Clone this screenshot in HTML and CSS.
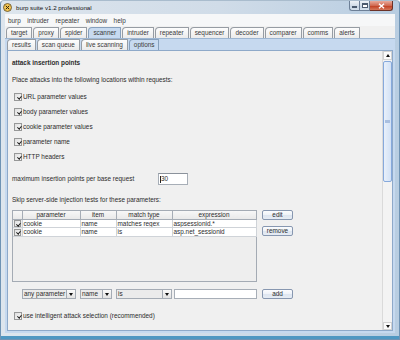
FILE: index.html
```html
<!DOCTYPE html>
<html>
<head>
    <title>burp suite v1.2 professional</title>
    <link rel="stylesheet" href="styles.css">
</head>
<body>
    <div class="window">
        <div class="titlebar">
            <svg class="app-icon" width="9" height="9" viewBox="0 0 9 9">
                <circle cx="4.5" cy="4.5" r="4" fill="#f2c451" stroke="#5b4a26" stroke-width="0.8"/>
                <path d="M2.8 2.8 L6.2 6.2 M6.2 2.8 L2.8 6.2" stroke="#2e2410" stroke-width="1"/>
            </svg>
            <span class="title">burp suite v1.2 professional</span>
            <div class="caption">
                <span class="cap cap-min"><span class="min-bar"></span></span>
                <span class="cap cap-max"><span class="max-box"></span></span>
                <span class="cap cap-close">
                    <svg width="7" height="6" viewBox="0 0 7 6"><path d="M1 0.8 L6 5.2 M6 0.8 L1 5.2" stroke="#fff" stroke-width="1.4"/></svg>
                </span>
            </div>
        </div>

        <div class="frame-body">
            <div class="client">
                <div class="menubar">
                    <span>burp</span>
                    <span>intruder</span>
                    <span>repeater</span>
                    <span>window</span>
                    <span>help</span>
                </div>

                <div class="tabs main-tabs">
                    <span class="tab">target</span>
                    <span class="tab">proxy</span>
                    <span class="tab">spider</span>
                    <span class="tab active">scanner</span>
                    <span class="tab">intruder</span>
                    <span class="tab">repeater</span>
                    <span class="tab">sequencer</span>
                    <span class="tab">decoder</span>
                    <span class="tab">comparer</span>
                    <span class="tab">comms</span>
                    <span class="tab">alerts</span>
                </div>

                <div class="tab-panel">
                    <div class="tabs sub-tabs">
                        <span class="tab">results</span>
                        <span class="tab">scan queue</span>
                        <span class="tab">live scanning</span>
                        <span class="tab active">options</span>
                    </div>

                    <div class="options-pane">
                        <div class="form">
                            <div class="heading">attack insertion points</div>
                            <div class="intro">Place attacks into the following locations within requests:</div>

                            <div class="checks">
                                <div class="check-row"><span class="cb checked"></span><span>URL parameter values</span></div>
                                <div class="check-row"><span class="cb checked"></span><span>body parameter values</span></div>
                                <div class="check-row"><span class="cb checked"></span><span>cookie parameter values</span></div>
                                <div class="check-row"><span class="cb checked"></span><span>parameter name</span></div>
                                <div class="check-row"><span class="cb checked"></span><span>HTTP headers</span></div>
                            </div>

                            <div class="max-row">
                                <span class="max-label">maximum insertion points per base request</span>
                                <span class="num-field"><span class="caret"></span>30</span>
                            </div>

                            <div class="skip">Skip server-side injection tests for these parameters:</div>

                            <div class="table-row">
                                <div class="table-box">
                                    <table>
                                        <colgroup>
                                            <col class="col-check">
                                            <col class="col-param">
                                            <col class="col-item">
                                            <col class="col-match">
                                            <col class="col-expr">
                                        </colgroup>
                                        <thead>
                                            <tr><th></th><th>parameter</th><th>item</th><th>match type</th><th>expression</th></tr>
                                        </thead>
                                        <tbody>
                                            <tr>
                                                <td class="cell-check"><span class="cb checked small"></span></td>
                                                <td>cookie</td><td>name</td><td>matches regex</td><td>aspsessionid.*</td>
                                            </tr>
                                            <tr>
                                                <td class="cell-check"><span class="cb checked small"></span></td>
                                                <td>cookie</td><td>name</td><td>is</td><td>asp.net_sessionid</td>
                                            </tr>
                                        </tbody>
                                    </table>
                                </div>
                                <div class="side-buttons">
                                    <button class="btn">edit</button>
                                    <button class="btn">remove</button>
                                </div>
                            </div>

                            <div class="filter-row">
                                <div class="combo combo-param"><span class="combo-value">any parameter</span><span class="combo-arrow"></span></div>
                                <div class="combo combo-name"><span class="combo-value">name</span><span class="combo-arrow"></span></div>
                                <div class="combo combo-op"><span class="combo-value">is</span><span class="combo-arrow"></span></div>
                                <span class="text-field"></span>
                                <button class="btn">add</button>
                            </div>

                            <div class="check-row last"><span class="cb checked"></span><span>use intelligent attack selection (recommended)</span></div>
                        </div>

                        <div class="vscroll">
                            <span class="sb-btn up"></span>
                            <span class="sb-thumb"><span class="grip"></span></span>
                            <span class="sb-track"></span>
                            <span class="sb-btn down"></span>
                        </div>
                    </div>
                </div>
            </div>
        </div>
    </div>
</body>
</html>
```

FILE: styles.css
```css
* {
    box-sizing: border-box;
}
body {
    margin: 0;
    font-family: "Liberation Sans", Arial, sans-serif;
    font-size: 6.4px;
    color: #2c2c2c;
}

/* window frame */
.window {
    width: 400px;
    height: 340px;
    display: flex;
    flex-direction: column;
    border: 1px solid #6f93b4;
    border-top-color: #a9bccd;
    border-radius: 4px 4px 0 0;
    background: linear-gradient(to right, #dde5ed 0%, #d0dce8 55%, #b8cde1 100%);
}
.titlebar {
    height: 13px;
    display: flex;
    align-items: center;
    padding-left: 2px;
}
.title {
    margin-left: 4px;
    font-size: 6.2px;
    color: #111;
}
.caption {
    margin-left: auto;
    margin-right: 6px;
    align-self: flex-start;
    display: flex;
}
.cap {
    height: 10px;
    display: flex;
    align-items: center;
    justify-content: center;
    border: 1px solid #6d8097;
    border-top: none;
    background: linear-gradient(#edf2f7, #d3dee9 50%, #c3d2e2 51%, #d5e1ec);
}
.cap-min {
    width: 10px;
    border-radius: 0 0 0 3px;
    border-right: none;
}
.cap-max {
    width: 11px;
}
.cap-close {
    width: 23px;
    border-left: none;
    border-color: #6b3228;
    border-radius: 0 0 3px 0;
    background: linear-gradient(#e9ab9c, #d06a52 50%, #bf3a1d 51%, #d5785b);
}
.min-bar {
    width: 5px;
    height: 2px;
    margin-top: 3px;
    background: #fff;
    border: 1px solid #4a5a6e;
}
.max-box {
    width: 6px;
    height: 5px;
    border: 1px solid #4a5a6e;
    border-top-width: 2px;
    background: #fff;
}

.frame-body {
    flex: 1;
    display: flex;
    padding: 0 4px 6px 4px;
    background: linear-gradient(to top, #4f97c2 0, #4f97c2 3px, transparent 3px);
}
.client {
    flex: 1;
    display: flex;
    flex-direction: column;
    background: #f0f0f0;
}

/* menu and tabs */
.menubar {
    height: 12px;
    display: flex;
    align-items: center;
    gap: 6.5px;
    padding-left: 3px;
    background: #f6f7f8;
    color: #3a3a3a;
}
.tabs {
    height: 12px;
    display: flex;
    align-items: flex-end;
    gap: 1px;
}
.main-tabs {
    padding-left: 1px;
}
.tab {
    height: 11px;
    padding: 0 4px;
    line-height: 10px;
    color: #3a3a3a;
    border: 1px solid #969ca3;
    border-bottom: none;
    border-radius: 4px 1px 0 0;
    background: linear-gradient(#fdfdfd, #ebebeb);
    white-space: nowrap;
}
.tab.active {
    background: #c7daf0;
    border-color: #86a0bd;
}
.tab-panel {
    flex: 1;
    display: flex;
    flex-direction: column;
    padding: 0 2px 2px 2px;
    background: #c6d9ef;
    border-top: 1px solid #9db6d2;
}
.sub-tabs {
    height: 11px;
}

/* options pane */
.options-pane {
    flex: 1;
    display: flex;
    border: 1px solid #8ea9c9;
    background: #f0f0f0;
}
.form {
    flex: 1;
    padding: 8px 0 0 4px;
    line-height: 8px;
}
.heading {
    font-weight: bold;
}
.intro {
    margin-top: 9px;
}
.checks {
    margin-top: 5px;
}
.check-row {
    height: 15px;
    display: flex;
    align-items: center;
    gap: 1px;
    padding-left: 2px;
}
.check-row.last {
    margin-top: 10px;
    height: 14px;
}
.cb {
    position: relative;
    width: 8px;
    height: 8px;
    flex: none;
    display: inline-block;
    border: 1px solid #979898;
    background: linear-gradient(135deg, #dedede, #fcfcfc);
}
.cb.checked::after {
    content: "";
    position: absolute;
    left: 2.5px;
    top: 1px;
    width: 1.5px;
    height: 3px;
    border-right: 1px solid #1a1a1a;
    border-bottom: 1px solid #1a1a1a;
    transform: rotate(40deg);
}
.cb.small {
    width: 7px;
    height: 7px;
}
.cb.small::after {
    left: 2px;
    top: 0.5px;
}

.max-row {
    margin-top: 9px;
    height: 12px;
    display: flex;
    align-items: center;
}
.max-label {
    width: 146px;
}
.num-field {
    width: 30px;
    height: 12px;
    display: flex;
    align-items: center;
    padding-left: 1px;
    border: 1px solid #a7aeb7;
    border-top-color: #8b929b;
    background: #fff;
}
.caret {
    width: 1px;
    height: 7px;
    background: #222;
}
.skip {
    margin-top: 11px;
}

/* table */
.table-row {
    margin-top: 6px;
    display: flex;
    gap: 5px;
}
.table-box {
    width: 245px;
    height: 72px;
    border: 1px solid #a4abb4;
    background: #eeeeee;
}
table {
    width: 243px;
    border-collapse: collapse;
    table-layout: fixed;
}
.col-check { width: 9px; }
.col-param { width: 58px; }
.col-item { width: 36px; }
.col-match { width: 56px; }
.col-expr { width: 84px; }
th {
    height: 8px;
    padding: 0;
    font-weight: normal;
    line-height: 7px;
    text-align: center;
    background: linear-gradient(#f7f7f7, #e9e9e9);
    border-right: 1px solid #a6adb6;
    border-bottom: 1px solid #a6adb6;
}
td {
    height: 8px;
    padding: 0 1px;
    line-height: 7px;
    white-space: nowrap;
    overflow: hidden;
    background: #fff;
    border-right: 1px solid #cfd3d8;
    border-bottom: 1px solid #cfd3d8;
}
td.cell-check {
    padding: 0;
    text-align: center;
    background: #eeeeee;
}
td.cell-check .cb {
    vertical-align: top;
    margin-top: 0.5px;
}

/* buttons and combos */
.side-buttons {
    display: flex;
    flex-direction: column;
    gap: 6px;
}
.btn {
    width: 31px;
    height: 10px;
    padding: 0;
    font: inherit;
    line-height: 8px;
    color: #2c2c2c;
    border: 1px solid #8797b0;
    border-radius: 2px;
    background: linear-gradient(#fbfcfe, #eef2f8 50%, #dde5f0 51%, #e6ecf4);
}
.filter-row {
    margin-top: 7px;
    height: 10px;
    display: flex;
    padding-left: 10px;
}
.combo {
    display: flex;
    border: 1px solid #a4abb4;
    background: #ebebeb;
}
.combo-param { width: 54px; margin-right: 4px; }
.combo-name { width: 32px; margin-right: 4px; }
.combo-op { width: 56px; margin-right: 2px; }
.combo-value {
    flex: 1;
    padding-left: 1px;
    white-space: nowrap;
    overflow: hidden;
}
.combo-arrow {
    width: 9px;
    display: flex;
    align-items: center;
    justify-content: center;
    border-left: 1px solid #a4abb4;
    background: linear-gradient(#fafafa, #e2e2e2);
}
.combo-arrow::after {
    content: "";
    border-top: 3px solid #111;
    border-left: 2.5px solid transparent;
    border-right: 2.5px solid transparent;
}
.text-field {
    width: 83px;
    margin-right: 5px;
    border: 1px solid #a7aeb7;
    background: #fff;
}

/* scrollbar */
.vscroll {
    width: 10px;
    display: flex;
    flex-direction: column;
    background: #f3f3f3;
    border-left: 1px solid #dadada;
}
.sb-btn {
    height: 9px;
    display: flex;
    align-items: center;
    justify-content: center;
    background: #fbfbfb;
    border: 1px solid #d2d2d2;
}
.sb-btn.up::after {
    content: "";
    border-bottom: 3px solid #111;
    border-left: 2.5px solid transparent;
    border-right: 2.5px solid transparent;
}
.sb-btn.down {
    height: 8px;
}
.sb-btn.down::after {
    content: "";
    border-top: 3px solid #111;
    border-left: 2.5px solid transparent;
    border-right: 2.5px solid transparent;
}
.sb-thumb {
    height: 121px;
    margin-top: 1px;
    display: flex;
    align-items: center;
    justify-content: center;
    border: 1px solid #86a9dc;
    border-radius: 2px;
    background: linear-gradient(to right, #e8f0fb, #d2e1f5);
}
.grip {
    width: 5px;
    height: 3px;
    background: #a9bfe0;
}
.sb-track {
    flex: 1;
}
```
